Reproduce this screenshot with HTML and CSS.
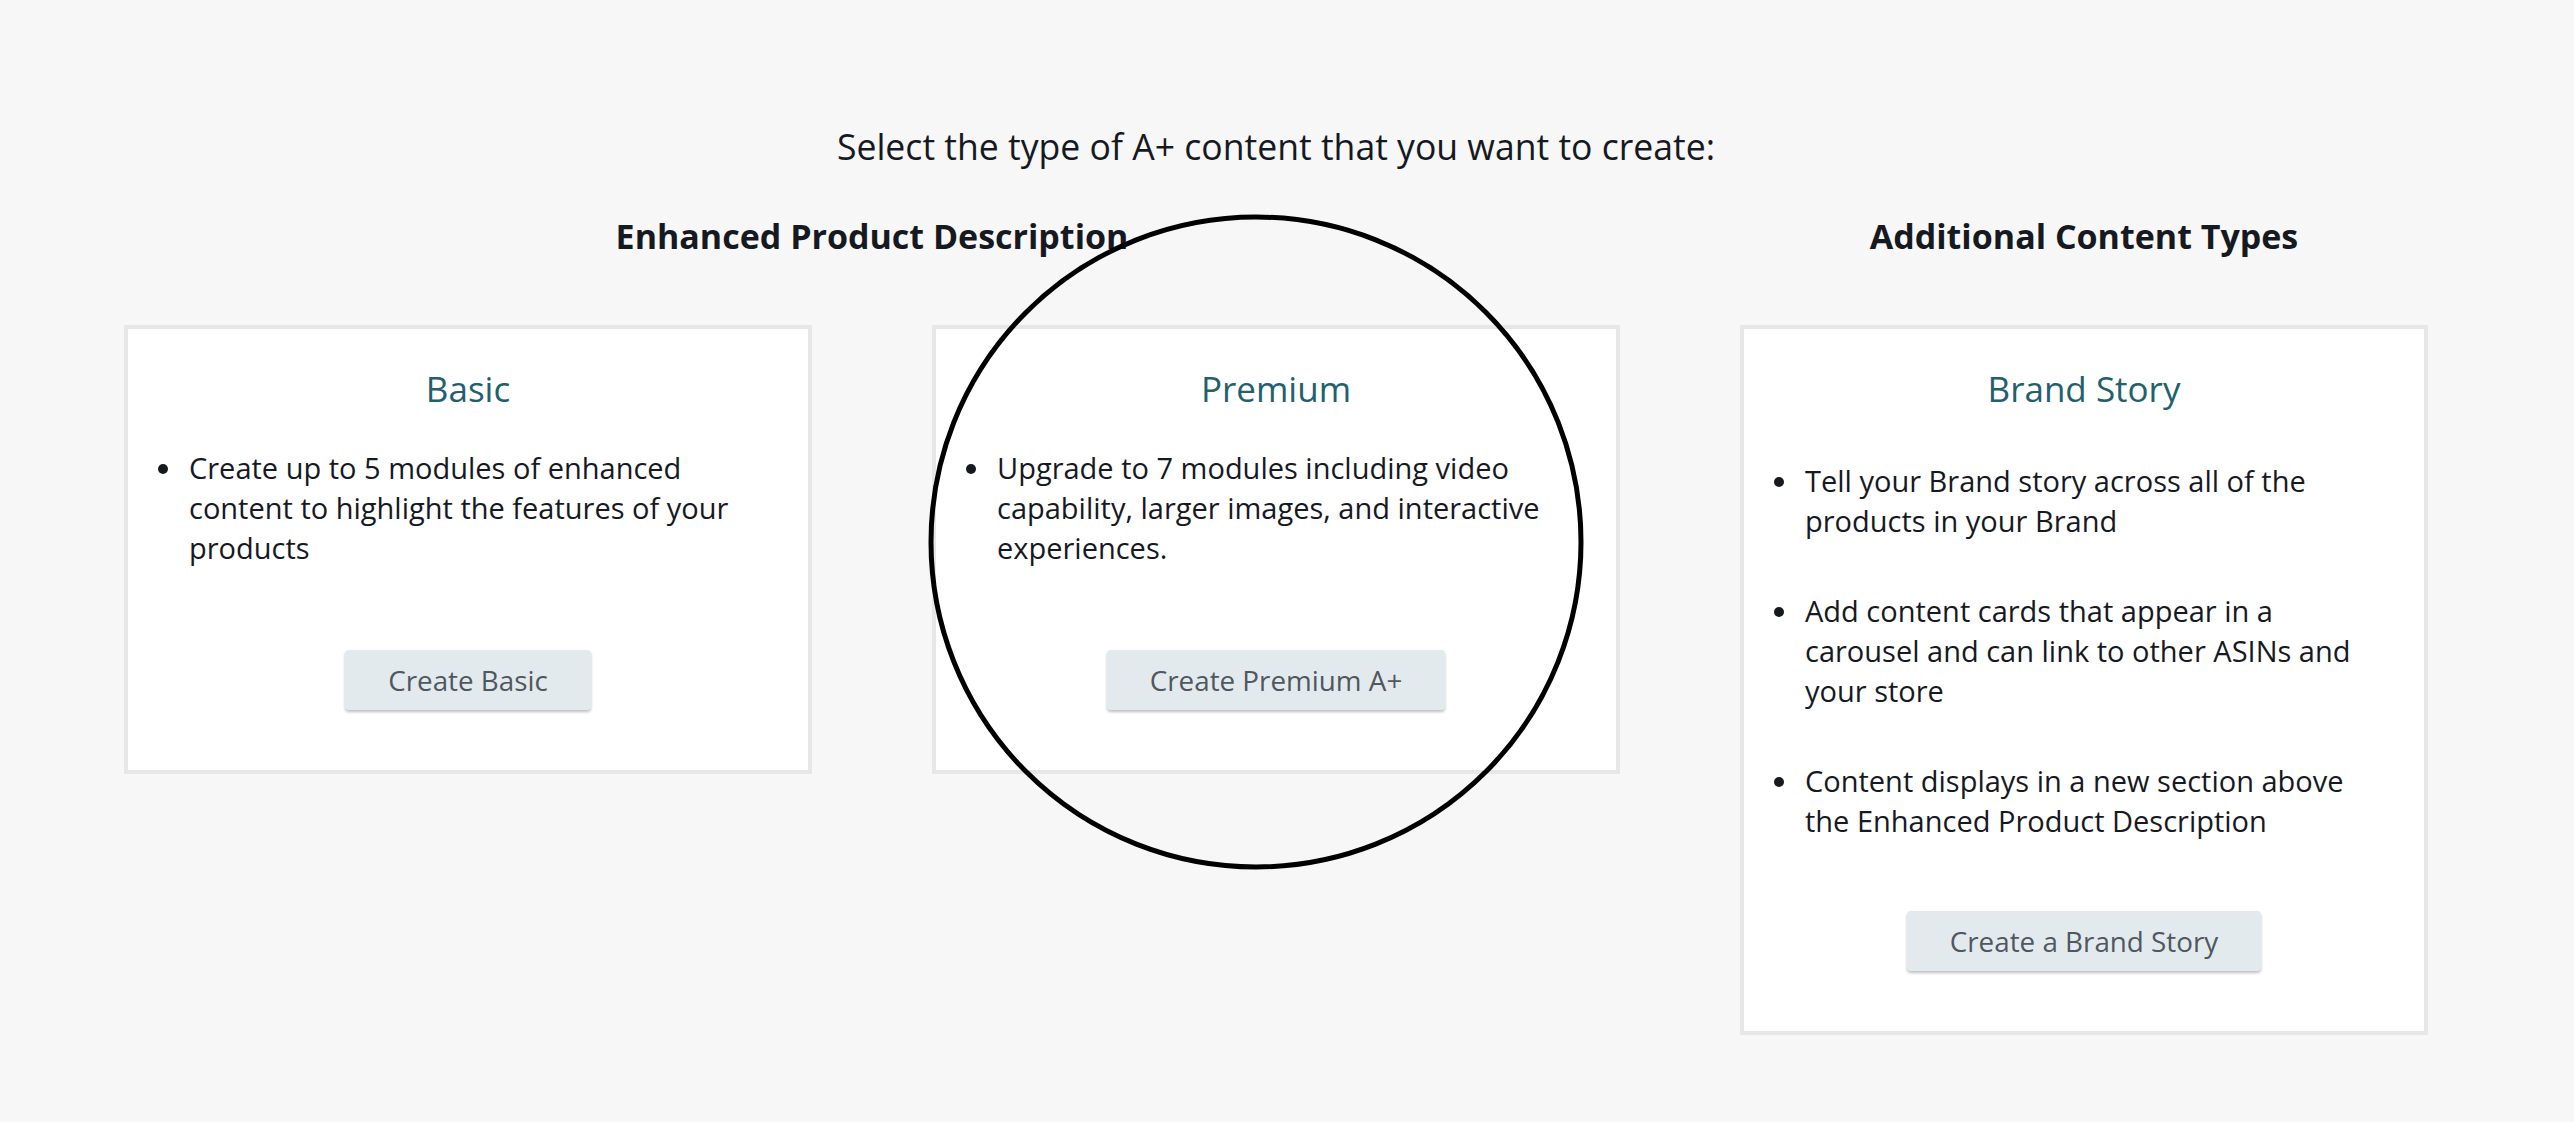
FILE: index.html
```html
<!DOCTYPE html>
<html lang="en">
<head>
<meta charset="utf-8">
<title>Select A+ content type</title>
<link rel="stylesheet" href="styles.css">
</head>
<body>
<main class="page">
  <h1 class="prompt">Select the type of A+ content that you want to create:</h1>
  <div class="groups">
    <section class="group">
      <h2 class="group-title">Enhanced Product Description</h2>
      <div class="cards cards-two">
        <article class="card">
          <h3 class="card-title">Basic</h3>
          <ul class="points">
            <li>Create up to 5 modules of enhanced content to highlight the features of your products</li>
          </ul>
          <button class="btn" type="button">Create Basic</button>
        </article>
        <article class="card">
          <h3 class="card-title">Premium</h3>
          <ul class="points">
            <li>Upgrade to 7 modules including video capability, larger images, and interactive experiences.</li>
          </ul>
          <button class="btn" type="button">Create Premium A+</button>
        </article>
      </div>
    </section>
    <section class="group">
      <h2 class="group-title">Additional Content Types</h2>
      <div class="cards">
        <article class="card">
          <h3 class="card-title">Brand Story</h3>
          <ul class="points points-spaced">
            <li>Tell your Brand story across all of the products in your Brand</li>
            <li>Add content cards that appear in a carousel and can link to other ASINs and your store</li>
            <li>Content displays in a new section above the Enhanced Product Description</li>
          </ul>
          <button class="btn" type="button">Create a Brand Story</button>
        </article>
      </div>
    </section>
  </div>
  <svg class="highlight" width="660" height="660" viewBox="0 0 660 660" aria-hidden="true">
    <circle cx="330" cy="330" r="325" fill="none" stroke="#000" stroke-width="5"/>
  </svg>
</main>
</body>
</html>
```
FILE: styles.css
```css
html, body {
  margin: 0;
  padding: 0;
  background: #f7f7f7;
}
body {
  font-family: "Open Sans", "Noto Sans", "Liberation Sans", sans-serif;
  color: #16191f;
}
.page {
  position: relative;
  min-height: 1122px;
  box-sizing: border-box;
  padding: 122px 146px 40px 124px;
}
.prompt {
  margin: 0;
  font-size: 35.6px;
  font-weight: 400;
  line-height: 48px;
  text-align: center;
}
.groups {
  margin-top: 42px;
  display: grid;
  grid-template-columns: 1496px 688px;
  column-gap: 120px;
  align-items: start;
}
.group-title {
  margin: 0 0 65px;
  font-size: 34px;
  font-weight: 700;
  line-height: 48px;
  text-align: center;
}
.cards {
  display: grid;
  grid-template-columns: 688px;
  column-gap: 120px;
  align-items: start;
}
.cards-two {
  grid-template-columns: 688px 688px;
}
.card {
  background: #fff;
  border: 4px solid #e7e7e7;
  padding: 38px 40px 60px 40px;
  display: flex;
  flex-direction: column;
  align-items: center;
}
.card-title {
  margin: 0;
  font-size: 35px;
  font-weight: 400;
  line-height: 44px;
  color: #23606e;
}
.points {
  align-self: stretch;
  margin: 37px 0 82px;
  padding: 0 20px 0 17px;
  font-size: 29px;
  line-height: 40px;
  display: flex;
  flex-direction: column;
  gap: 50px;
}
.points-spaced {
  margin: 50px 0 70px;
}
.points li {
  padding-left: 4px;
}
.btn {
  font-family: inherit;
  font-size: 27.8px;
  line-height: 36px;
  color: #4f5760;
  background: #e3eaed;
  border: 0;
  border-radius: 4px;
  padding: 12px 43px;
  box-shadow: 0 2px 3px rgba(0, 0, 0, 0.25);
  cursor: pointer;
}
.highlight {
  position: absolute;
  left: 926px;
  top: 212px;
}
```
